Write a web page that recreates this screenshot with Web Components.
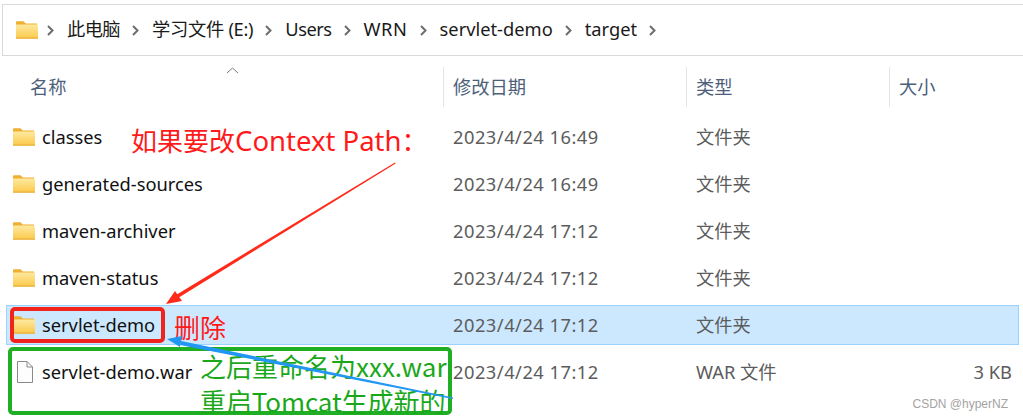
<!DOCTYPE html>
<html lang="zh">
<head>
<meta charset="utf-8">
<title>target</title>
<style>
  html, body { margin: 0; background: #fff; }
  body { width: 1023px; height: 420px; overflow: hidden; position: relative; font-family: "Noto Sans", "Noto Sans CJK SC", sans-serif; }
</style>
</head>
<body>
<explorer-window>
  <path-bar>
    <path-crumb style="letter-spacing:-.6px">此电脑</path-crumb>
    <path-crumb style="letter-spacing:-.3px">学习文件 (E:)</path-crumb>
    <path-crumb style="letter-spacing:-.5px">Users</path-crumb>
    <path-crumb style="letter-spacing:.6px">WRN</path-crumb>
    <path-crumb>servlet-demo</path-crumb>
    <path-crumb>target</path-crumb>
  </path-bar>
  <file-header></file-header>
  <file-row name="classes" date="2023/4/24 16:49" type="文件夹"></file-row>
  <file-row name="generated-sources" date="2023/4/24 16:49" type="文件夹"></file-row>
  <file-row name="maven-archiver" date="2023/4/24 17:12" type="文件夹"></file-row>
  <file-row name="maven-status" date="2023/4/24 17:12" type="文件夹"></file-row>
  <file-row name="servlet-demo" date="2023/4/24 17:12" type="文件夹" selected></file-row>
  <file-row name="servlet-demo.war" date="2023/4/24 17:12" type="WAR 文件" size="3 KB" icon="file"></file-row>
</explorer-window>
<note-layer></note-layer>

<script>
const FOLDER_SVG = `
  <svg width="24" height="20" viewBox="0 0 24 20">
    <defs>
      <linearGradient id="fg" x1="0" y1="0" x2="0" y2="1">
        <stop offset="0" stop-color="#fde9a0"/>
        <stop offset="1" stop-color="#fbc94a"/>
      </linearGradient>
    </defs>
    <path d="M1 2.5C1 1.7 1.5 1.2 2.2 1.2H8.5L10.8 3.4H22V6H1Z" fill="#eeb032"/>
    <rect x="1" y="4.6" width="22" height="14" rx=".6" fill="url(#fg)"/>
    <rect x="1" y="17.6" width="22" height="1" fill="#e5a92e"/>
  </svg>`;

const FILE_SVG = `
  <svg width="24" height="24" viewBox="0 0 24 24">
    <path d="M5.5 1.5H15L20.5 7V22.5H5.5Z" fill="#fdfdfd" stroke="#8a8a8a"/>
    <path d="M15 1.5V7H20.5" fill="none" stroke="#8a8a8a"/>
  </svg>`;

class ExplorerWindow extends HTMLElement {
  connectedCallback() {
    this.attachShadow({ mode: 'open' });
    this.shadowRoot.innerHTML = `
      <style>
        :host {
          display: flex;
          flex-direction: column;
          width: 1023px;
          height: 420px;
          padding-top: 4px;
          box-sizing: border-box;
          color: #1a1a1a;
          font-size: 18.3px;
        }
      </style>
      <slot></slot>`;
  }
}

class PathBar extends HTMLElement {
  connectedCallback() {
    this.attachShadow({ mode: 'open' });
    this.shadowRoot.innerHTML = `
      <style>
        :host {
          display: flex;
          align-items: center;
          height: 52px;
          margin-left: 2px;
          padding-left: 12px;
          box-sizing: border-box;
          border: 1px solid #d9d9d9;
          border-right: 0;
        }
        .root { display: flex; margin-right: -4px; }
      </style>
      <span class="root">${FOLDER_SVG}</span>
      <slot></slot>`;
  }
}

class PathCrumb extends HTMLElement {
  connectedCallback() {
    this.attachShadow({ mode: 'open' });
    this.shadowRoot.innerHTML = `
      <style>
        :host { display: flex; align-items: center; }
        svg { margin: 1px 13px 0 12px; }
        .label { white-space: nowrap; padding-bottom: 4px; }
        .end { display: none; }
        :host(:last-child) .end { display: block; }
      </style>
      <svg width="7" height="11" viewBox="0 0 7 11"><path d="M1 1L5.5 5.5L1 10" fill="none" stroke="#6d6d6d" stroke-width="2"/></svg>
      <span class="label"><slot></slot></span>
      <svg class="end" width="7" height="11" viewBox="0 0 7 11"><path d="M1 1L5.5 5.5L1 10" fill="none" stroke="#6d6d6d" stroke-width="2"/></svg>`;
  }
}

class FileHeader extends HTMLElement {
  connectedCallback() {
    this.attachShadow({ mode: 'open' });
    this.shadowRoot.innerHTML = `
      <style>
        :host {
          display: grid;
          grid-template-columns: 443px 243px 203px 1fr;
          height: 40px;
          margin-top: 11px;
          color: #4c607a;
          position: relative;
        }
        div { display: flex; align-items: center; padding: 0 0 2px 9px; }
        div + div { border-left: 1px solid #e5e5e5; }
        .first { padding-left: 30px; }
        svg { position: absolute; left: 226px; top: 0; }
      </style>
      <div class="first">名称</div><div>修改日期</div><div>类型</div><div>大小</div>
      <svg width="13" height="7" viewBox="0 0 13 7"><path d="M1 6L6.5 1L12 6" fill="none" stroke="#7a7a7a"/></svg>`;
  }
}

class FileRow extends HTMLElement {
  connectedCallback() {
    this.attachShadow({ mode: 'open' });
    const icon = this.getAttribute('icon') === 'file' ? FILE_SVG : FOLDER_SVG;
    this.shadowRoot.innerHTML = `
      <style>
        :host {
          display: grid;
          grid-template-columns: 437px 243px 203px 1fr;
          align-items: center;
          height: 40px;
          margin: 7px 4px 0 6px;
          box-sizing: border-box;
          color: #5c5c5c;
          border: 1px solid transparent;
        }
        :host([selected]) { background: #cce8ff; border-color: #99d1ff; }
        :host(:first-of-type) { margin-top: 10px; }
        .name { display: flex; align-items: center; color: #111; white-space: nowrap; }
        .label { padding-bottom: 2px; }
        .icon { display: flex; width: 35px; padding-left: 5px; box-sizing: border-box; }
        .cell { padding: 0 0 2px 9px; white-space: nowrap; }
        .date { letter-spacing: .5px; }
        .size { text-align: right; padding-right: 6px; }
      </style>
      <div class="name"><span class="icon">${icon}</span><span class="label">${this.getAttribute('name')}</span></div>
      <div class="cell date">${this.getAttribute('date')}</div>
      <div class="cell">${this.getAttribute('type')}</div>
      <div class="cell size">${this.getAttribute('size') || ''}</div>`;
  }
}

// annotations drawn on top of the screenshot
class NoteLayer extends HTMLElement {
  connectedCallback() {
    this.attachShadow({ mode: 'open' });
    this.shadowRoot.innerHTML = `
      <style>
        :host { position: absolute; inset: 0; display: block; pointer-events: none; font-family: "Noto Sans CJK SC", "Noto Sans", sans-serif; }
        .note { position: absolute; white-space: nowrap; line-height: 1; }
        .red { color: #ff1a1a; }
        .green { color: #1aa81a; }
        .latin { font-family: "Noto Sans", sans-serif; font-size: 27.5px; }
        .box { position: absolute; box-sizing: border-box; border-radius: 5px; }
        svg { position: absolute; left: 0; top: 0; }
        .mark { position: absolute; right: 15px; bottom: 9px; font: 12px "Liberation Sans", sans-serif; color: #a3a3a3; white-space: nowrap; }
      </style>
      <div class="box" style="left:10px;top:307px;width:155px;height:36px;border:4px solid #f0241c"></div>
      <div class="box" style="left:8px;top:347px;width:444px;height:68px;border:4px solid #1fae24"></div>
      <div class="note red" style="left:131px;top:127px;font-size:26px">如果要改<span class="latin">Context Path</span>：</div>
      <div class="note red" style="left:174px;top:314px;font-size:26px">删除</div>
      <div class="note green" style="left:200px;top:353px;font-size:26px">之后重命名为xxx.war</div>
      <div class="note green" style="left:200px;top:388px;font-size:26px;letter-spacing:-.1px">重启Tomcat生成新的</div>
      <svg width="1023" height="420" viewBox="0 0 1023 420">
        <path d="M395 162.500L395.600 163.500L178 298L176 295Z" fill="#ff2a1a"/>
        <path d="M166 304L175 291L182 301Z" fill="#ff2a1a"/>
        <path d="M453 397.500L452.800 399L180 345L181 341Z" fill="#2196f3"/>
        <path d="M167 339L182 336L180 347Z" fill="#2196f3"/>
      </svg>
      <div class="mark">CSDN @hyperNZ</div>`;
  }
}

customElements.define('explorer-window', ExplorerWindow);
customElements.define('path-bar', PathBar);
customElements.define('path-crumb', PathCrumb);
customElements.define('file-header', FileHeader);
customElements.define('file-row', FileRow);
customElements.define('note-layer', NoteLayer);
</script>
</body>
</html>
